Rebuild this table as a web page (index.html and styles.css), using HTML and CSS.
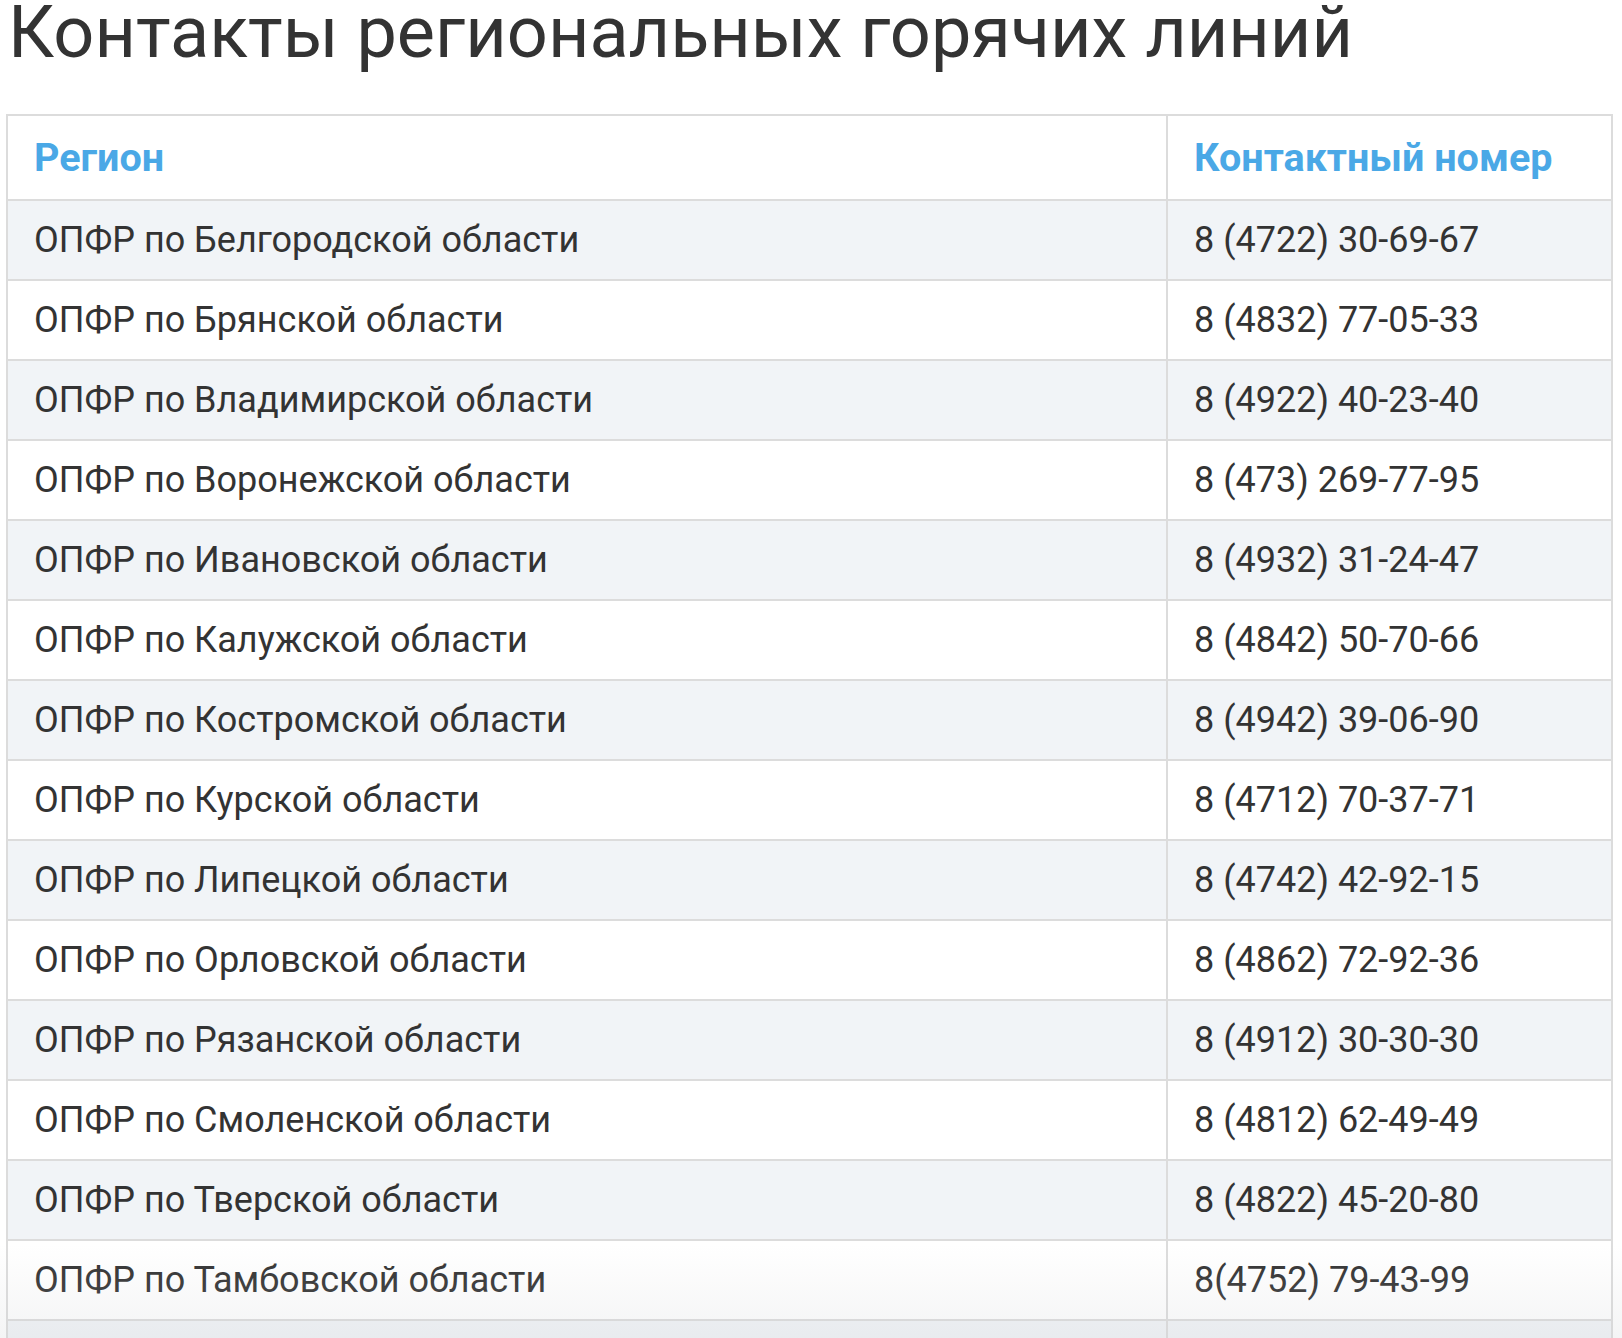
FILE: index.html
```html
<!DOCTYPE html>
<html lang="ru">
<head>
<meta charset="utf-8">
<title>Контакты региональных горячих линий</title>
<link rel="stylesheet" href="styles.css">
</head>
<body>
<div class="page">
  <h1 class="title">Контакты региональных горячих линий</h1>
  <div class="table-wrap">
    <table class="hotlines">
      <thead>
        <tr><th class="col-region">Регион</th><th class="col-phone">Контактный номер</th></tr>
      </thead>
      <tbody>
        <tr><td>ОПФР по Белгородской области</td><td>8 (4722) 30-69-67</td></tr>
        <tr><td>ОПФР по Брянской области</td><td>8 (4832) 77-05-33</td></tr>
        <tr><td>ОПФР по Владимирской области</td><td>8 (4922) 40-23-40</td></tr>
        <tr><td>ОПФР по Воронежской области</td><td>8 (473) 269-77-95</td></tr>
        <tr><td>ОПФР по Ивановской области</td><td>8 (4932) 31-24-47</td></tr>
        <tr><td>ОПФР по Калужской области</td><td>8 (4842) 50-70-66</td></tr>
        <tr><td>ОПФР по Костромской области</td><td>8 (4942) 39-06-90</td></tr>
        <tr><td>ОПФР по Курской области</td><td>8 (4712) 70-37-71</td></tr>
        <tr><td>ОПФР по Липецкой области</td><td>8 (4742) 42-92-15</td></tr>
        <tr><td>ОПФР по Орловской области</td><td>8 (4862) 72-92-36</td></tr>
        <tr><td>ОПФР по Рязанской области</td><td>8 (4912) 30-30-30</td></tr>
        <tr><td>ОПФР по Смоленской области</td><td>8 (4812) 62-49-49</td></tr>
        <tr><td>ОПФР по Тверской области</td><td>8 (4822) 45-20-80</td></tr>
        <tr><td>ОПФР по Тамбовской области</td><td>8(4752) 79-43-99</td></tr>
        <tr class="more-row"><td></td><td></td></tr>
      </tbody>
    </table>
  </div>
  <div class="fade"></div>
</div>
</body>
</html>
```

FILE: styles.css
```css
html, body {
  margin: 0;
  padding: 0;
  background: #fff;
}
body {
  font-family: Roboto, "Noto Sans", Arial, sans-serif;
  color: #333;
  overflow: hidden;
  height: 1338px;
}
.page {
  position: relative;
  height: 1338px;
  overflow: hidden;
  padding: 0 9px 0 6px;
}
.title {
  margin: -3px 0 0 2px;
  font-size: 72px;
  font-weight: 400;
  line-height: 72px;
  color: #333;
  height: 117px;
}
.hotlines {
  width: 100%;
  border-collapse: collapse;
  border: 2px solid #dcdcdc;
  font-size: 36px;
}
.hotlines th,
.hotlines td {
  border: 2px solid #dcdcdc;
  text-align: left;
  padding: 0 26px;
  line-height: 48px;
}
.hotlines th {
  color: #4aa8e6;
  font-weight: 700;
  font-size: 39.5px;
  height: 83px;
}
.hotlines td {
  height: 78px;
}
.col-region { width: 1106px; }
.hotlines tbody tr:nth-child(odd) td {
  background: #f1f4f7;
}
.fade {
  position: absolute;
  left: 0;
  right: 0;
  top: 1245px;
  height: 93px;
  background: linear-gradient(to bottom, rgba(200,202,205,0) 0%, rgba(200,202,205,0.2) 100%);
  pointer-events: none;
}
```
